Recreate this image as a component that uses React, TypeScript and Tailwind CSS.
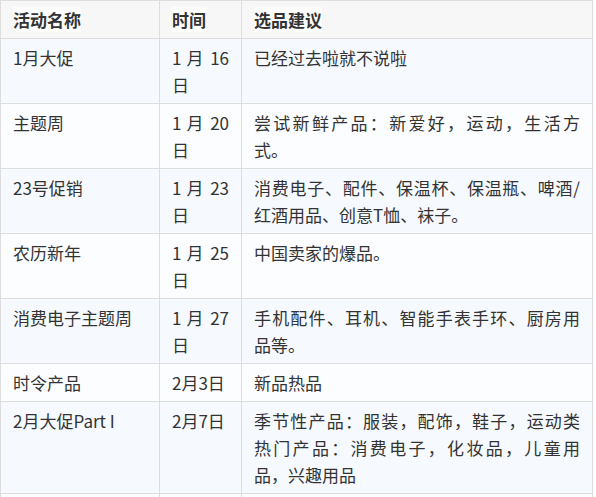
import * as React from "react";

interface Activity {
  name: string;
  date: string;
  advice: string[];
}

// advice lines are kept as they break in the source table
const activities: Activity[] = [
  { name: "1月大促", date: "1 月 16 日", advice: ["已经过去啦就不说啦"] },
  { name: "主题周", date: "1 月 20 日", advice: ["尝试新鲜产品：新爱好，运动，生活方", "式。"] },
  { name: "23号促销", date: "1 月 23 日", advice: ["消费电子、配件、保温杯、保温瓶、啤酒/", "红酒用品、创意T恤、袜子。"] },
  { name: "农历新年", date: "1 月 25 日", advice: ["中国卖家的爆品。"] },
  { name: "消费电子主题周", date: "1 月 27 日", advice: ["手机配件、耳机、智能手表手环、厨房用", "品等。"] },
  { name: "时令产品", date: "2月3日", advice: ["新品热品"] },
  {
    name: "2月大促Part I",
    date: "2月7日",
    advice: ["季节性产品：服装，配饰，鞋子，运动类", "热门产品：消费电子，化妆品，儿童用", "品，兴趣用品"],
  },
  { name: "2月大促Part II", date: "2月14日", advice: ["情人节礼品"] },
];

const cell = "border border-[#dddddd] px-3 py-[5px] align-top text-justify";

export default function App() {
  return (
    <div className="bg-white w-[596px] h-[497px] overflow-hidden">
      <table
        className="table-fixed border-collapse w-[593px] text-[17px] leading-[27px] text-[#333333]"
        style={{ fontFamily: '"Noto Sans CJK SC", "Noto Sans", sans-serif' }}
      >
        <colgroup>
          <col className="w-[159px]" />
          <col className="w-[82px]" />
          <col />
        </colgroup>
        <thead>
          <tr className="bg-[#f7f7f7]">
            <th className={`${cell} text-left font-bold`}>
              <span className="bg-[#fdfdfd]">活动名称</span>
            </th>
            <th className={`${cell} text-left font-bold`}>
              <span className="bg-[#fdfdfd]">时间</span>
            </th>
            <th className={`${cell} text-left font-bold`}>
              <span className="bg-[#fdfdfd]">选品建议</span>
            </th>
          </tr>
        </thead>
        <tbody>
          {activities.map((a, i) => (
            <tr key={a.name} className={i % 2 === 0 ? "bg-[#f6faff]" : "bg-[#fcfdff]"}>
              <td className={cell}>{a.name}</td>
              <td className={cell}>{a.date}</td>
              <td className={cell}>
                {a.advice.map((line, j) => (
                  <span
                    key={j}
                    className={
                      j < a.advice.length - 1
                        ? "block whitespace-nowrap [text-align-last:justify]"
                        : "block"
                    }
                  >
                    {line}
                  </span>
                ))}
              </td>
            </tr>
          ))}
        </tbody>
      </table>
    </div>
  );
}
